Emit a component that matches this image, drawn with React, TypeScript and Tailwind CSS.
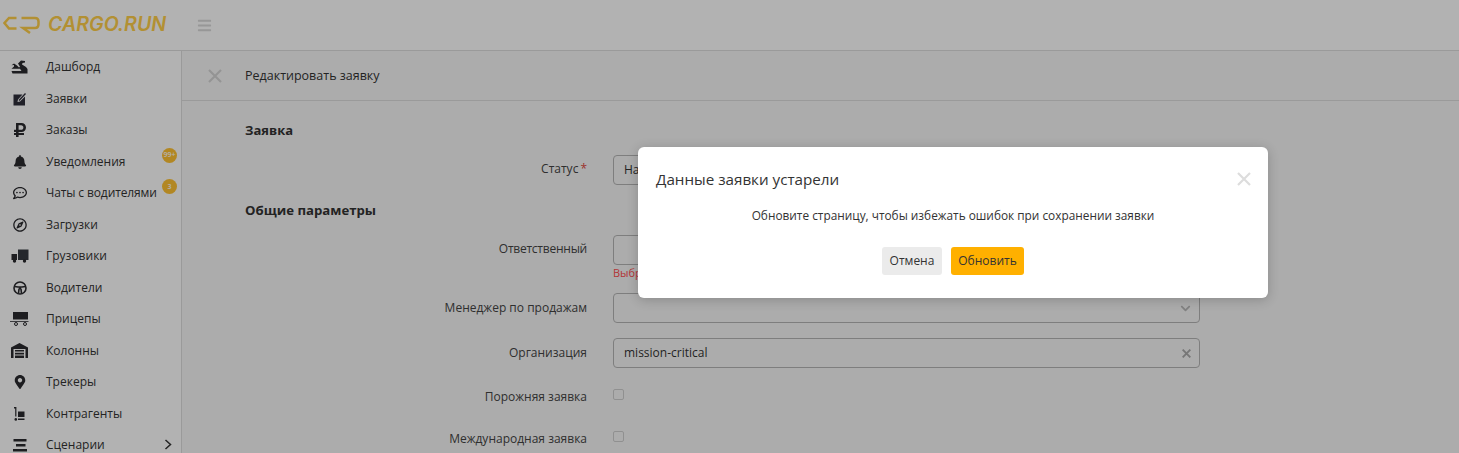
import { FaBell, FaRegCommentDots, FaRegCompass, FaRubleSign, FaMapMarkerAlt, FaChevronDown, FaBars } from "react-icons/fa";
import type { ReactNode } from "react";

const Logo = () => (
  <svg width="38" height="20" viewBox="0 0 38 20" fill="none" stroke="#ffcf4a" strokeWidth="2.5" className="shrink-0">
    <path d="M13.5 3H6L1.5 8L6 13.5H13.5" />
    <path d="M18.5 3H32Q35.5 3 35.5 6.5V9Q35.5 13 32 13H20L27 18" />
  </svg>
);

const DashIcon = () => (
  <svg width="17" height="14" viewBox="0 0 17 14" fill="#2a2a2e">
    <path d="M7 3.5L10 0.5L14 1V2.6L11.5 3L11 4.5L15 7L16.5 9V13.5H1.5L0.5 11H10.5L9 8.8H0.5L3 6.5V5L0.5 5.2L3 3.5L6 5.5L8 7.5L9 6.8Z" />
  </svg>
);

const EditIcon = () => (
  <svg width="14" height="14" viewBox="0 0 14 14">
    <path d="M0.5 2.5H9.5L5 7.5L4.5 10L7 9.5L12 4.5V13.5H0.5Z" fill="#2e2e3a" />
    <path d="M6 8.5L12.5 1.5" stroke="#2e2e3a" strokeWidth="1.4" />
  </svg>
);

const TruckIcon = () => (
  <svg width="18" height="14" viewBox="0 0 18 14" fill="#2a2a2e">
    <path d="M7 0.5H17.5V11H7Z" fill="#34383f" />
    <path d="M0.5 5H6V11H0.5Z" />
    <circle cx="3.5" cy="12" r="1.7" />
    <circle cx="13.5" cy="12" r="1.7" />
  </svg>
);

const WheelIcon = () => (
  <svg width="14" height="14" viewBox="0 0 14 14" fill="none" stroke="#2a2a2e">
    <circle cx="7" cy="7" r="6" strokeWidth="1.6" />
    <path d="M1.5 5.5L5 6H9L12.5 5.5M6 8L5.5 12.5M8 8L8.5 12.5" strokeWidth="1.6" />
    <circle cx="7" cy="7.2" r="1.3" fill="#2a2a2e" stroke="none" />
  </svg>
);

const TrailerIcon = () => (
  <svg width="19" height="14" viewBox="0 0 19 14" fill="#2a2a2e">
    <path d="M3 0H18V7.5H3Z" />
    <path d="M0 9H18.5V10H0Z" fill="#55555a" />
    <circle cx="6" cy="12" r="1.5" fill="none" stroke="#2a2a2e" />
    <circle cx="15" cy="12" r="1.5" fill="none" stroke="#2a2a2e" />
  </svg>
);

const GarageIcon = () => (
  <svg width="17" height="15" viewBox="0 0 17 15" fill="#2a2a2e">
    <path d="M0 4.5L8.5 0L17 4.5V15H14.5V6H2.5V15H0Z" />
    <path d="M4 7H13V8.6H4ZM4 9.8H13V11.4H4ZM4 12.6H13V15H4Z" />
  </svg>
);

const DollyIcon = () => (
  <svg width="11" height="14" viewBox="0 0 11 14" fill="#2a2a2e">
    <path d="M0 0H2.4V9.5H1.2V1.4H0Z" />
    <path d="M4 4.5H10.5V10H4Z" />
    <circle cx="1.8" cy="12.4" r="1.3" />
    <path d="M4 11.5H10.5V13H4Z" />
  </svg>
);

const ScenarioIcon = () => (
  <svg width="14" height="13" viewBox="0 0 14 13" fill="#2a2a2e">
    <path d="M0.5 0H13.5V2.4H0.5ZM3 5H12.5V7.4H3ZM0 10H14V12.4H0Z" />
  </svg>
);

const CloseIcon = ({ size, color, weight = 2.2 }: { size: number; color: string; weight?: number }) => (
  <svg width={size} height={size} viewBox="0 0 14 14" fill="none" stroke={color} strokeWidth={weight}>
    <path d="M1 1L13 13M13 1L1 13" />
  </svg>
);

const Chevron = () => (
  <svg width="8" height="11" viewBox="0 0 8 11" fill="none" stroke="#333" strokeWidth="1.5">
    <path d="M1.5 1L6.5 5.5L1.5 10" />
  </svg>
);

type Item = { icon: ReactNode; label: string; badge?: string; arrow?: boolean; tight?: boolean };

const items: Item[] = [
  { icon: <DashIcon />, label: "Дашборд" },
  { icon: <EditIcon />, label: "Заявки" },
  { icon: <FaRubleSign size={16} color="#2a2a2e" />, label: "Заказы" },
  { icon: <FaBell size={14} color="#2a2a2e" />, label: "Уведомления", badge: "99+" },
  { icon: <FaRegCommentDots size={14} color="#2a2a2e" />, label: "Чаты с водителями", badge: "3", tight: true },
  { icon: <FaRegCompass size={14} color="#2a2a2e" />, label: "Загрузки" },
  { icon: <TruckIcon />, label: "Грузовики" },
  { icon: <WheelIcon />, label: "Водители" },
  { icon: <TrailerIcon />, label: "Прицепы" },
  { icon: <GarageIcon />, label: "Колонны" },
  { icon: <FaMapMarkerAlt size={14} color="#2a2a2e" />, label: "Трекеры" },
  { icon: <DollyIcon />, label: "Контрагенты" },
  { icon: <ScenarioIcon />, label: "Сценарии", arrow: true },
];

const Row = ({ label, children, className = "", labelClass = "pt-[6px]" }: { label: ReactNode; children: ReactNode; className?: string; labelClass?: string }) => (
  <div className={`flex ${className}`}>
    <div className={`w-[342px] shrink-0 text-right text-[12px] leading-[18px] text-[#444] ${labelClass}`}>{label}</div>
    <div className="ml-[26px] w-[587px]">{children}</div>
  </div>
);

const Input = ({ children }: { children?: ReactNode }) => (
  <div className="relative flex h-[30px] items-center rounded-[4px] border border-[#b5b5b5] px-[10px] text-[12px] text-[#333]">
    {children}
  </div>
);

export default function App() {
  return (
    <div className="relative h-[453px] w-[1459px] overflow-hidden bg-white font-['Open_Sans',sans-serif]">
      {/* Top bar */}
      <header className="flex h-[51px] items-center border-b border-[#ddd] bg-white">
        <div className="ml-[3px]"><Logo /></div>
        <span className="ml-[7px] font-['Inter',sans-serif] text-[19.6px] font-semibold italic text-[#ffcf4a]">CARGO.RUN</span>
        <FaBars size={15} color="#d8d8d8" className="ml-[31px]" />
      </header>
      <div className="flex h-[402px]">
        <aside className="w-[182px] shrink-0 border-r border-[#ddd] bg-white pt-[0.4px]">
          {items.map((it) => (
            <div key={it.label} className="relative flex h-[31.5px] items-center text-[12px] text-[#333]">
              <div className="flex w-[39px] shrink-0 justify-center">{it.icon}</div>
              <span className={it.tight ? "ml-[7px] whitespace-nowrap tracking-[-0.12px]" : "ml-[7px] whitespace-nowrap"}>{it.label}</span>
              {it.badge && (
                <span className="absolute left-[162px] top-[2px] flex h-[15px] w-[15px] items-center justify-center rounded-full bg-[#ffc233] text-[7px] font-semibold text-white">
                  {it.badge}
                </span>
              )}
              {it.arrow && <div className="absolute left-[164px] top-[10px]"><Chevron /></div>}
            </div>
          ))}
        </aside>
        <main className="flex-1 bg-[#f7f7f7]">
          <div className="flex h-[50px] items-center border-b border-[#ddd]">
            <div className="ml-[26px]"><CloseIcon size={14} color="#d4d4d4" /></div>
            <span className="ml-[23px] pt-[1px] text-[12.5px] text-[#333]">Редактировать заявку</span>
          </div>
          <div className="pl-[63px]">
            <h3 className="mt-[20px] text-[13px] font-bold leading-[18px] text-[#333]">Заявка</h3>
            <Row className="mt-[16px]" labelClass="pt-[5px]" label={<>Статус<span className="ml-[2px] text-[#e0483e]">*</span></>}>
              <Input>На</Input>
            </Row>
            <h3 className="mt-[16px] text-[13.2px] font-bold leading-[18px] text-[#333]">Общие параметры</h3>
            <Row className="mt-[16px]" labelClass="pt-[5px] tracking-[-0.24px]" label="Ответственный">
              <Input />
              <div className="mt-[1px] text-[11px] leading-[14px] text-[#ff4d4f]">Выбрать ответственного</div>
            </Row>
            <Row className="mt-[13px]" label="Менеджер по продажам">
              <Input><FaChevronDown size={11} color="#bbb" className="absolute right-[8px] top-[9px]" /></Input>
            </Row>
            <Row className="mt-[15px]" label="Организация">
              <Input>mission-critical<span className="absolute right-[8px] top-[10px]"><CloseIcon size={9} color="#aaa" weight={3} /></span></Input>
            </Row>
            <Row className="mt-[12px]" labelClass="pt-[8px]" label="Порожняя заявка">
              <div className="mt-[9px] h-[11px] w-[11px] rounded-[2px] border border-[#cfcfcf]" />
            </Row>
            <Row className="mt-[16px]" labelClass="pt-[8px]" label="Международная заявка">
              <div className="mt-[9px] h-[11px] w-[11px] rounded-[2px] border border-[#cfcfcf]" />
            </Row>
          </div>
        </main>
      </div>
      {/* Overlay + modal */}
      <div className="absolute inset-0 bg-black/30">
        <div className="relative ml-[638px] mt-[147px] h-[151px] w-[630px] rounded-[6px] bg-white shadow-[0_2px_12px_rgba(0,0,0,0.2)]">
          <div className="pl-[18px] pt-[22px] text-[15.2px] leading-[20px] text-[#333]">Данные заявки устарели</div>
          <div className="absolute right-[17px] top-[25px]"><CloseIcon size={14} color="#ddd" /></div>
          <div className="mt-[17px] text-center text-[11.85px] leading-[18px] text-[#333]">Обновите страницу, чтобы избежать ошибок при сохранении заявки</div>
          <div className="mt-[23px] flex justify-center gap-[9px]">
            <button className="h-[28px] w-[60px] rounded-[3px] bg-[#ebebeb] text-[12px] text-[#333]">Отмена</button>
            <button className="h-[28px] w-[73px] rounded-[3px] bg-[#ffb000] text-[12px] text-[#333]">Обновить</button>
          </div>
        </div>
      </div>
    </div>
  );
}
